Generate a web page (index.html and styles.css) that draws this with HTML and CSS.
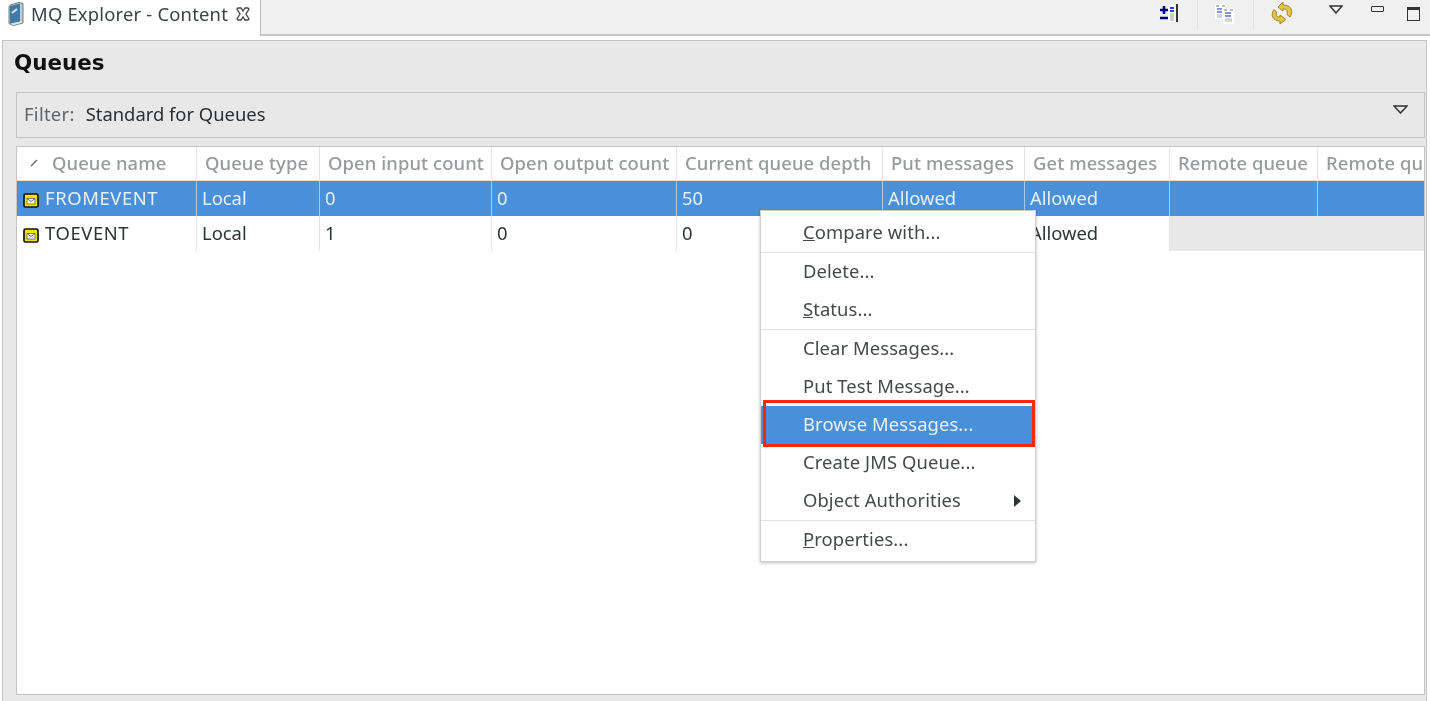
FILE: index.html
```html
<!DOCTYPE html>
<html lang="en">
  <head>
    <meta charset="UTF-8" />
    <title>MQ Explorer - Content</title>
    <link rel="stylesheet" href="styles.css">
  </head>
  <body>
    <div class="tabbar">
      <div class="tab">
        <svg class="tab-icon" width="18" height="26" viewBox="0 0 18 26">
          <path d="M3 4 L12 1.500 L16 2.500 V22 L6 24.500 L2 22.500 V6 Z" fill="#c4c9cc" stroke="#6f7a80"/>
          <path d="M3 5 L13 2.500 V20.500 L3 22.500 Z" fill="#3f7ba8"/>
          <path d="M5 12 L10 8" stroke="#d5e8f7" stroke-width="2"/>
          <path d="M5 23.500 L15 21" stroke="#e8e4d0" stroke-width="1.500"/>
        </svg>
        <span class="tab-title">MQ Explorer - Content</span>
        <svg class="tab-close" width="14" height="14" viewBox="0 0 14 14">
          <path d="M2 1 L5 1 L7 4 L9 1 L12 1 L13 2 L10 7 L13 12 L12 13 L9 13 L7 10 L5 13 L2 13 L1 12 L4 7 L1 2 Z" fill="none" stroke="#444" stroke-width="1.3"/>
        </svg>
      </div>
      <div class="tools">
        <svg class="tool" width="20" height="20" viewBox="0 0 20 20">
          <path d="M1 7 H9 M5 3 V11 M1 15 H9" stroke="#00008b" stroke-width="2.6"/>
          <rect x="9" y="1" width="7" height="18" fill="#fff"/>
          <path d="M11 5 H15 M11 8 H15" stroke="#2a3fd0" stroke-width="2"/>
          <path d="M11 11 H15 M11 13 H15 M11 15 H15 M11 17 H15" stroke="#999"/>
          <path d="M18 1 V19" stroke="#333" stroke-width="2"/>
        </svg>
        <i class="tool-sep"></i>
        <svg class="tool" width="20" height="22" viewBox="0 0 20 22">
          <rect x="0" y="1" width="11" height="15" fill="#fff"/>
          <rect x="8" y="5" width="11" height="16" fill="#fff"/>
          <path d="M1 3 H4 M7 3 H10 M9 7 H12 M15 7 H18" stroke="#777" stroke-width="1.200"/>
          <path d="M2 6 H7 M2 9 H7 M10 10 H16 M10 13 H16" stroke="#5a72e0" stroke-width="1.300"/>
          <path d="M2 12 H7 M2 14 H7 M10 16 H17 M10 18 H17" stroke="#aaa"/>
        </svg>
        <i class="tool-sep"></i>
        <svg class="tool tool-sync" width="24" height="24" viewBox="0 0 24 24">
          <path d="M13 1 L8 6 L13 10 V8 C16.500 7.500 18 10 17 13.500 L20 16 C24 10 21 4 13 4 Z" fill="#e6c63f" stroke="#8f7d2a" stroke-width=".9"/>
          <path d="M10 23 L16 18.500 L10 14 V16 C7 16.500 5.500 14 6.500 11 L4 8.500 C0 14 3 20 10 20 Z" fill="#e6c63f" stroke="#8f7d2a" stroke-width=".9"/>
        </svg>
        <svg class="view-menu" width="14" height="9" viewBox="0 0 14 9">
          <path d="M1 1 H13 L7 8 Z" fill="#f0f0f0" stroke="#333" stroke-width="1.500"/>
        </svg>
        <span class="btn-min"></span>
        <span class="btn-max"></span>
      </div>
    </div>

    <div class="panel">
      <h1 class="title">Queues</h1>
      <div class="filter">
        <span class="filter-label">Filter:</span>
        <span class="filter-value">Standard for Queues</span>
        <svg class="filter-arrow" width="15" height="9" viewBox="0 0 15 9">
          <path d="M1 1 H14 L7.500 8 Z" fill="#e8e8e8" stroke="#333" stroke-width="1.500"/>
        </svg>
      </div>

      <div class="table">
        <div class="row head">
          <div class="cell first"><svg class="sort" width="10" height="10" viewBox="0 0 10 10"><path d="M2 8 L8 2" stroke="#666" stroke-width="1.200"/></svg>Queue name</div>
          <div class="cell">Queue type</div>
          <div class="cell">Open input count</div>
          <div class="cell">Open output count</div>
          <div class="cell">Current queue depth</div>
          <div class="cell">Put messages</div>
          <div class="cell">Get messages</div>
          <div class="cell">Remote queue</div>
          <div class="cell">Remote queue manager</div>
        </div>
        <div class="row selected">
          <div class="cell name">
            <svg class="queue-icon" width="16" height="15" viewBox="0 0 16 15"><rect x="1" y="1" width="14" height="13" rx="1.500" fill="#f5e000" stroke="#111" stroke-width="1.700"/><rect x="4" y="5.500" width="8" height="5.500" fill="#f4f4ee" stroke="#555" stroke-width=".7"/><path d="M4 5.500 L8 8.500 L12 5.500" fill="none" stroke="#555" stroke-width=".8"/></svg>
            <span class="queue-name">FROMEVENT</span>
          </div>
          <div class="cell">Local</div>
          <div class="cell">0</div>
          <div class="cell">0</div>
          <div class="cell">50</div>
          <div class="cell">Allowed</div>
          <div class="cell">Allowed</div>
          <div class="cell"></div>
          <div class="cell"></div>
        </div>
        <div class="row">
          <div class="cell name">
            <svg class="queue-icon" width="16" height="15" viewBox="0 0 16 15"><rect x="1" y="1" width="14" height="13" rx="1.500" fill="#f5e000" stroke="#111" stroke-width="1.700"/><rect x="4" y="5.500" width="8" height="5.500" fill="#f4f4ee" stroke="#555" stroke-width=".7"/><path d="M4 5.500 L8 8.500 L12 5.500" fill="none" stroke="#555" stroke-width=".8"/></svg>
            <span class="queue-name">TOEVENT</span>
          </div>
          <div class="cell">Local</div>
          <div class="cell">1</div>
          <div class="cell">0</div>
          <div class="cell">0</div>
          <div class="cell">Allowed</div>
          <div class="cell">Allowed</div>
          <div class="cell empty"></div>
          <div class="cell empty"></div>
        </div>
      </div>
    </div>

    <div class="menu">
      <div class="item"><span><u>C</u>ompare with...</span></div>
      <hr />
      <div class="item">Delete...</div>
      <div class="item"><span><u>S</u>tatus...</span></div>
      <hr />
      <div class="item">Clear Messages...</div>
      <div class="item">Put Test Message...</div>
      <div class="item active">Browse Messages...</div>
      <div class="item">Create JMS Queue...</div>
      <div class="item">Object Authorities<i class="arrow"></i></div>
      <hr />
      <div class="item"><span><u>P</u>roperties...</span></div>
    </div>
    <div class="highlight"></div>
  </body>
</html>
```

FILE: styles.css
```css
html,
body {
  height: 100%;
}
body {
  margin: 0;
  width: 1430px;
  height: 701px;
  overflow: hidden;
  position: relative;
  background-color: #fff;
  font-family: "Noto Sans", "Open Sans", sans-serif;
  font-size: 18.4px;
  color: #2e3436;
  display: flex;
  flex-direction: column;
  filter: blur(0.4px);
}

/* top tab strip */
.tabbar {
  height: 36px;
  flex: none;
  display: flex;
  background-color: #f0f0f0;
  border-bottom: 2px solid #c8c8c8;
  box-sizing: border-box;
}
.tab {
  width: 261px;
  height: 36px;
  box-sizing: border-box;
  background-color: #fff;
  border-right: 1px solid #b9b9b9;
  display: flex;
  align-items: center;
  padding: 0 0 8px 7px;
  flex: none;
}
.tab-title {
  margin: 0 0 2px 6px;
  color: #3c4144;
  white-space: nowrap;
  width: 205px;
  letter-spacing: 0.2px;
}
.tab-close {
  flex: none;
}
.tools {
  flex: 1;
  display: flex;
  align-items: flex-start;
  position: relative;
  padding-left: 898px;
  height: 32px;
}
.tool {
  margin-top: 3px;
  flex: none;
}
.tool-sep {
  width: 1px;
  height: 30px;
  background-color: #e2e2e2;
  margin: 0 17px 0 18px;
  flex: none;
}
.tool-sync {
  margin-top: 1px;
  margin-left: -1px;
}
.view-menu {
  margin: 5px 0 0 35px;
  flex: none;
}
.btn-min {
  width: 11px;
  height: 4px;
  border: 1.500px solid #333;
  border-radius: 1px;
  background-color: #f0f0f0;
  margin: 6px 0 0 28px;
  flex: none;
}
.btn-max {
  width: 11px;
  height: 10px;
  border: 1.500px solid #333;
  border-top-width: 3px;
  margin: 7px 0 0 23px;
  flex: none;
}

/* main panel */
.panel {
  flex: 1;
  margin: 4px 3px 0 2px;
  padding: 0 1px 0 13px;
  background-color: #e8e8e8;
  border: 1px solid #c4c4c4;
  border-bottom: none;
  min-height: 0;
}
.title {
  margin: 0 0 0 -2px;
  height: 51px;
  line-height: 44px;
  font-family: "DejaVu Sans", sans-serif;
  font-size: 21.4px;
  font-weight: 700;
  color: #111;
}
.filter {
  height: 46px;
  box-sizing: border-box;
  border: 1px solid #c4c4c4;
  display: flex;
  align-items: center;
  padding: 0 15px 4px 7px;
  position: relative;
}
.filter-label {
  color: #5f6568;
  letter-spacing: 0.3px;
}
.filter-value {
  margin-left: 11px;
  color: #2b2f31;
}
.filter-arrow {
  position: absolute;
  right: 16px;
  top: 12px;
}

/* table */
.table {
  margin-top: 8px;
  height: 549px;
  box-sizing: border-box;
  background-color: #fff;
  border: 1px solid #c4c4c4;
  overflow: hidden;
}
.row {
  display: grid;
  grid-template-columns: 180px 123px 172px 185px 206px 142px 145px 148px 160px;
  height: 35px;
  white-space: nowrap;
}
.cell {
  box-sizing: border-box;
  padding-left: 5px;
  border-right: 1px solid #e4e4e4;
  line-height: 34px;
  overflow: hidden;
}
.head {
  height: 34px;
  color: #979b9d;
  font-weight: 500;
  letter-spacing: 0.1px;
  border-bottom: 1px solid #e0e0e0;
  box-sizing: border-box;
}
.head .cell {
  padding-left: 8px;
  line-height: 32px;
}
.head .first {
  display: flex;
  align-items: center;
  padding-left: 12px;
  padding-bottom: 1px;
}
.sort {
  margin-right: 13px;
  flex: none;
}
.selected {
  background-color: #4a90d9;
  color: #e6f0fa;
}
.selected .cell {
  border-right-color: #a9c9ec;
}
.name {
  display: flex;
  align-items: flex-start;
  padding-left: 6px;
  gap: 6px;
}
.queue-name {
  letter-spacing: 0.6px;
}
.queue-icon {
  flex: none;
  margin-top: 12px;
}
.empty {
  background-color: #e8e8e8;
  border-right: none;
}

/* context menu */
.menu {
  position: absolute;
  left: 760px;
  top: 210px;
  width: 276px;
  height: 352px;
  box-sizing: border-box;
  background-color: #fff;
  border: 1px solid #d0d0d0;
  box-shadow: 0 1px 3px rgba(0, 0, 0, 0.25);
  padding-top: 3px;
}
.menu hr {
  margin: 0;
  height: 1px;
  border: none;
  background-color: #e2e2e2;
}
.item {
  height: 38px;
  line-height: 35px;
  padding-left: 42px;
  color: #45494b;
  position: relative;
  white-space: nowrap;
  letter-spacing: 0.1px;
}
.active {
  background-color: #4a90d9;
  color: #e6f0fa;
}
.arrow {
  position: absolute;
  right: 14px;
  top: 13px;
  border-left: 7px solid #2e3436;
  border-top: 6px solid transparent;
  border-bottom: 6px solid transparent;
}
.highlight {
  position: absolute;
  left: 763px;
  top: 400px;
  width: 272px;
  height: 47px;
  box-sizing: border-box;
  border: 3px solid #f5280f;
}
```
